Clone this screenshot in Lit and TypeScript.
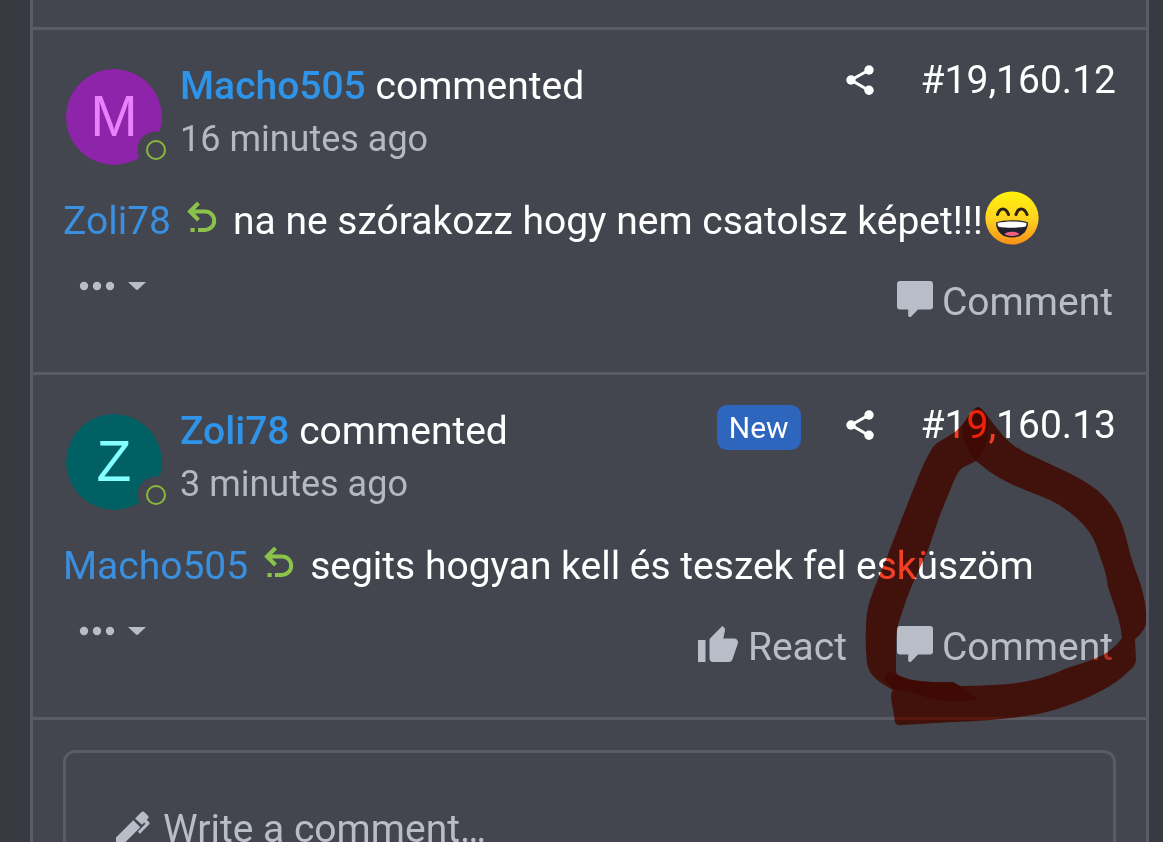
import { LitElement, html, svg, css, nothing } from "lit";
import { customElement, property } from "lit/decorators.js";

interface Comment {
  author: string;
  tone: string;
  time: string;
  number: string;
  replyTo: string;
  text: string;
  grin?: boolean;
  isNew?: boolean;
  canReact?: boolean;
  marked?: boolean;
}

const shareIcon = html`<svg class="share-icon" viewBox="0 0 28 30" aria-hidden="true">
  <path d="M23 5 5 15l18 10.500" fill="none" stroke="currentColor" stroke-width="3" />
  <circle cx="23" cy="5" r="4.700" /><circle cx="5" cy="15" r="4.700" /><circle cx="23" cy="25.300" r="4.700" />
</svg>`;

const replyIcon = html`<svg class="reply-icon" viewBox="0 0 30 32" aria-hidden="true">
  <path d="M11.500 2 3 10.500l8.500 8.500M3.500 10.500H18a9.200 9.200 0 0 1 0 18.400H11" fill="none" stroke="currentColor" stroke-width="4" />
  <path d="M3.500 27h4.200v4H3.500z" />
</svg>`;

const moreIcon = html`<svg class="more-icon" viewBox="0 0 68 10" aria-hidden="true">
  <circle cx="5" cy="5" r="4.200" /><circle cx="18" cy="5" r="4.200" /><circle cx="31" cy="5" r="4.200" />
  <path d="M49 1h18l-8 7.500q-1 .8-2 0z" />
</svg>`;

const commentIcon = html`<svg class="action-icon" viewBox="0 0 36 36" aria-hidden="true">
  <path d="M3 0h30a3 3 0 0 1 3 3v22.500a3 3 0 0 1-3 3H21l-6.500 6.800c-1.500 1.300-3.300.8-3.300-1v-5.800H3a3 3 0 0 1-3-3V3a3 3 0 0 1 3-3z" />
</svg>`;

const likeIcon = html`<svg class="like-icon" viewBox="0 0 40 36" aria-hidden="true">
  <path d="M0 14h7.500v22H0zM11.500 14.500c0-1.200.4-2 1.200-2.800L24.300 0l2 1.800c.7.700.9 1.500.7 2.500l-1.700 8.200H36c2.300 0 4 1.700 4 3.800 0 .6-.1 1-.3 1.600l-5.200 15.400c-.6 1.700-1.900 2.700-3.700 2.700H15c-2 0-3.500-1.600-3.500-3.600z" />
</svg>`;

const penIcon = html`<svg class="pen-icon" viewBox="0 0 34 34" aria-hidden="true">
  <path d="M0 26.500 17.300 9.200l7 7L7.500 33H0zM19 7.500l6-6c1.200-1.200 2.600-1.200 3.700 0l3 3c1.100 1.100 1.100 2 .2 3.100l-1.200 1.200 2.300 2.300c.8.8.8 1.700 0 2.500l-9 9.200-2.200-2.100 7.700-8-1.300-1.300-2.300 2.400z" />
</svg>`;

const grinIcon = html`<svg class="grin" viewBox="0 0 54 54" role="img" aria-label="grinning face">
  <defs>
    <linearGradient id="face" x1="0" y1="0" x2="0" y2="1">
      <stop offset="0" stop-color="#fff20c" /><stop offset=".5" stop-color="#ffd51f" /><stop offset="1" stop-color="#f98f1a" />
    </linearGradient>
  </defs>
  <circle cx="27" cy="27" r="26.600" fill="url(#face)" />
  <path d="M12.500 23.500c2-7.500 8.500-7.500 11 0M31 23.500c2-7.500 8.500-7.500 11 0" fill="none" stroke="#2a2118" stroke-width="3" stroke-linecap="round" />
  <path d="M11 31.500c8-3 24-3 32 0 0 9-6.500 15-16 15s-16-6-16-15z" fill="#20202f" />
  <path d="M12.500 32c8-2 21-2 29 0 0 1.500-.3 2.500-1 3.700-8 1.300-19 1.300-27 0-.7-1.200-1-2.200-1-3.700z" fill="#fff" />
  <path d="M19.500 43c3-3 12-3 15 0-4 2.800-11 2.800-15 0z" fill="#f0607c" />
</svg>`;

const marker = svg`
  <path class="ink" fill-rule="evenodd" d="M979 407C987 413 990 420 997 428Q1004 438 1013 445Q1024 453 1037 458L1067 472Q1084 480 1097 490Q1112 503 1120 520C1127 536 1128 548 1132 560C1136 573 1140 580 1142 590Q1147 607 1146 620Q1147 630 1135 639L1136 660Q1135 667 1130 670Q1118 682 1103 690Q1075 705 1043 713Q1010 720 953 722L902 725Q896 726 895 722L891 698Q891 692 893 690Q884 685 877 680Q868 672 867 663Q865 645 866 627Q866 612 870 600Q876 583 887 557L900 523L917 480Q924 462 930 452Q932 447 937 443L955 432Q961 427 967 419Q974 407 979 407ZM976 461L962 468Q957 473 953 483L940 515L928 550L913 583Q905 602 902 613Q896 628 896 640V670Q896 674 898 675Q908 680 920 681Q937 683 953 682L960 686Q977 686 993 685Q1015 684 1033 680Q1050 676 1067 668Q1088 662 1103 655Q1115 648 1122 638Q1121 627 1118 617L1108 587Q1106 571 1100 557Q1096 542 1090 533Q1083 523 1073 515Q1062 506 1050 500L1013 485Q999 478 990 472Z" />
  <path class="ink overlap" d="M979 407Q987 412 988 422Q990 445 976 461Q963 446 962 426Q972 407 979 407ZM893 690L884 678Q888 668 897 675Q908 680 920 681Q937 683 953 682Q967 690 978 699Q952 705 925 697Q908 690 893 690Z" />`;

@customElement("comment-item")
class CommentItem extends LitElement {
  @property({ attribute: false }) comment!: Comment;

  static styles = css`
    :host { display: block; border-top: 3px solid #595c64; }
    .item { position: relative; padding: 39px 30px 47px; }
    .head { display: flex; align-items: flex-start; padding-left: 3px; }
    .avatar { position: relative; flex: none; width: 96px; height: 96px; }
    .disc {
      display: flex; align-items: center; justify-content: center;
      width: 96px; height: 96px; border-radius: 50%;
      font-family: "Liberation Sans", sans-serif; font-size: 57px; line-height: 94px;
      box-sizing: border-box; padding-bottom: 2px;
      mask: radial-gradient(circle at 90px 81px, transparent 18px, #000 19px);
    }
    .purple { background: #8e24aa; color: #ea80fc; }
    .teal { background: #006064; color: #84ffff; }
    .status {
      position: absolute; right: -4px; bottom: 5px; box-sizing: border-box;
      width: 20px; height: 20px; border: 2px solid #8bb83c; border-radius: 50%;
    }
    .who { margin-left: 18px; flex: 1; min-width: 0; }
    .name { margin: 0; font-size: 39px; line-height: 46px; font-weight: 400; margin-top: -6px; }
    .author { font-weight: 500; color: #2f93e8; text-decoration: none; }
    .time { font-size: 36px; line-height: 44px; color: #b4b8c2; margin-top: 8px; display: block; }
    .meta { display: flex; align-items: center; height: 46px; margin-top: -12px; }
    .badge {
      background: #2e66bd; border-radius: 10px; padding: 0 12px;
      font-size: 30px; line-height: 45px; margin-right: 45px; margin-top: 5px;
    }
    .share { margin-right: 47px; }
    .number { font-size: 39px; line-height: 46px; color: inherit; text-decoration: none; }
    button {
      display: flex; align-items: center; border: 0; padding: 0; background: none;
      font: inherit; color: inherit; cursor: pointer;
    }
    svg { display: block; fill: currentColor; flex: none; }
    .share-icon { width: 28px; height: 30px; }
    .body { display: flex; align-items: center; margin: 28px 0 0; font-size: 39px; line-height: 56px; height: 56px; white-space: nowrap; }
    .mention { color: #3b8fdf; text-decoration: none; }
    .reply-icon { width: 30px; height: 32px; margin: 0 16px 8px; color: #8bc34a; }
    .grin { width: 54px; height: 54px; margin: 0 0 6px 2px; }
    .foot { display: flex; align-items: flex-start; color: #b9bdc7; padding: 0 3px 0 16px; }
    .more { margin-top: 32px; margin-right: auto; }
    .more-icon { width: 68px; height: 10px; }
    .action { font-size: 39px; line-height: 46px; margin-top: 30px; margin-left: 50px; height: 46px; }
    .action-icon { width: 36px; height: 36px; margin: 0 9px 6px 0; }
    .like-icon { width: 40px; height: 36px; margin: 0 10px 6px 0; }
    .marker {
      position: absolute; top: 0; right: 0; width: 296px; height: 345px;
      overflow: visible; mix-blend-mode: multiply; pointer-events: none;
    }
    .ink { fill: #f53e26; }
    .overlap { fill: #f78c50; mix-blend-mode: multiply; }
  `;

  render() {
    const c = this.comment;
    return html`<article class="item">
      <header class="head">
        <div class="avatar">
          <div class="disc ${c.tone}" aria-hidden="true">${c.author[0]}</div>
          <span class="status" role="img" aria-label="online"></span>
        </div>
        <div class="who">
          <h2 class="name"><a class="author" href="#user">${c.author}</a> commented</h2>
          <time class="time">${c.time}</time>
        </div>
        <div class="meta">
          ${c.isNew ? html`<span class="badge">New</span>` : nothing}
          <button class="share" aria-label="Share">${shareIcon}</button>
          <a class="number" href="#comment">${c.number}</a>
        </div>
      </header>
      <p class="body"><a class="mention" href="#user">${c.replyTo}</a>${replyIcon}<span>${c.text}</span>${c.grin ? grinIcon : nothing}</p>
      <footer class="foot">
        <button class="more" aria-label="More options">${moreIcon}</button>
        ${c.canReact ? html`<button class="action">${likeIcon}React</button>` : nothing}
        <button class="action">${commentIcon}Comment</button>
      </footer>
      ${c.marked ? html`<svg class="marker" viewBox="850 375 296 345" aria-hidden="true">${marker}</svg>` : nothing}
    </article>`;
  }
}

@customElement("app-root")
class AppRoot extends LitElement {
  static styles = css`
    :host {
      display: block; box-sizing: border-box; height: 100vh; overflow: hidden;
      padding: 0 14px 0 30px; background: #383a41; color: #fff;
      font-family: Roboto, "Liberation Sans", sans-serif;
    }
    .thread { background: #43464e; border: 3px solid #595c64; border-width: 0 3px; min-height: 100vh; }
    .previous { height: 27px; }
    .composer { border-top: 3px solid #595c64; padding: 30px; }
    .field {
      display: flex; align-items: center; padding: 53px 48px; color: #b9bdc7;
      border: 3px solid #595c64; border-radius: 12px;
    }
    .pen-icon { flex: none; width: 34px; height: 34px; margin: 0 13px 2px 2px; fill: currentColor; }
    .input {
      flex: 1; min-width: 0; border: 0; padding: 0; background: none; outline: 0;
      color: inherit; font-family: inherit; font-size: 39px; line-height: 46px; height: 46px;
    }
    .input::placeholder { color: inherit; opacity: 1; }
  `;

  private comments: Comment[] = [
    {
      author: "Macho505", tone: "purple", time: "16 minutes ago", number: "#19,160.12",
      replyTo: "Zoli78", text: "na ne szórakozz hogy nem csatolsz képet!!!", grin: true,
    },
    {
      author: "Zoli78", tone: "teal", time: "3 minutes ago", number: "#19,160.13",
      replyTo: "Macho505", text: "segits hogyan kell és teszek fel esküszöm",
      isNew: true, canReact: true, marked: true,
    },
  ];

  render() {
    return html`<main class="thread">
      <div class="previous"></div>
      ${this.comments.map((c) => html`<comment-item .comment=${c}></comment-item>`)}
      <div class="composer">
        <label class="field">${penIcon}<input class="input" aria-label="Write a comment" placeholder="Write a comment…" /></label>
      </div>
    </main>`;
  }
}
